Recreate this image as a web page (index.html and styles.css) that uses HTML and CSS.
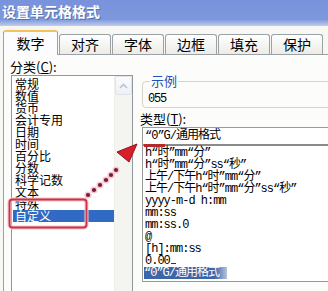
FILE: index.html
```html
<!DOCTYPE html>
<html lang="zh-CN">
<head>
    <meta charset="UTF-8">
    <title>设置单元格格式</title>
    <link rel="stylesheet" href="styles.css">
</head>
<body>
    <div class="titlebar">设置单元格格式</div>

    <div class="tabs">
        <div class="tab active">数字</div>
        <div class="tab">对齐</div>
        <div class="tab">字体</div>
        <div class="tab">边框</div>
        <div class="tab">填充</div>
        <div class="tab">保护</div>
    </div>

    <div class="panel">
        <!-- 分类 -->
        <div class="left-col">
            <div class="label">分类(<u>C</u>):</div>
            <div class="catlist">
                <div class="catitems">
                    <div>常规</div>
                    <div>数值</div>
                    <div>货币</div>
                    <div>会计专用</div>
                    <div>日期</div>
                    <div>时间</div>
                    <div>百分比</div>
                    <div>分数</div>
                    <div>科学记数</div>
                    <div>文本</div>
                    <div>特殊</div>
                    <div class="selected">自定义</div>
                </div>
                <div class="scrollbar">
                    <div class="scroll-btn">
                        <svg width="9" height="6" viewBox="0 0 9 6"><path d="M1 5 L4.5 1.5 L8 5" fill="none" stroke="#b9c3d6" stroke-width="1.6"/></svg>
                    </div>
                </div>
            </div>
        </div>

        <!-- 示例 / 类型 -->
        <div class="right-col">
            <fieldset class="sample">
                <legend>示例</legend>
                <div class="sample-value">055</div>
            </fieldset>
            <div class="label type-label">类型(<u>T</u>):</div>
            <div class="type-input">“0”G/通用格式</div>
            <div class="type-list">
                <div>h“时”mm“分”</div>
                <div>h“时”mm“分”ss“秒”</div>
                <div>上午/下午h“时”mm“分”</div>
                <div>上午/下午h“时”mm“分”ss“秒”</div>
                <div>yyyy-m-d h:mm</div>
                <div>mm:ss</div>
                <div>mm:ss.0</div>
                <div>@</div>
                <div>[h]:mm:ss</div>
                <div>0.00<span class="caret"></span></div>
                <div><span class="selected">“0”G/通用格式</span></div>
            </div>
        </div>
    </div>

    <!-- 标注：红框和箭头 -->
    <svg class="markup" width="328" height="291" viewBox="0 0 328 291">
        <rect x="9.5" y="199.5" width="77" height="28" rx="3" fill="none" stroke="#f3c3ca" stroke-width="4"/>
        <rect x="9.5" y="199.5" width="77" height="28" rx="3" fill="none" stroke="#cc3344" stroke-width="1.8"/>
        <rect x="144" y="144" width="21" height="3" fill="#b42a2a"/>
        <g fill="#f4c8d1">
            <circle cx="88" cy="195" r="3.6"/>
            <circle cx="94" cy="190" r="3.6"/>
            <circle cx="100" cy="185" r="3.6"/>
            <circle cx="106" cy="180" r="3.6"/>
            <circle cx="111" cy="175" r="3.6"/>
            <circle cx="116" cy="170" r="3.6"/>
        </g>
        <g fill="#7a1a38">
            <circle cx="88" cy="195" r="2.1"/>
            <circle cx="94" cy="190" r="2.1"/>
            <circle cx="100" cy="185" r="2.1"/>
            <circle cx="106" cy="180" r="2.1"/>
            <circle cx="111" cy="175" r="2.1"/>
            <circle cx="116" cy="170" r="2.1"/>
        </g>
        <polygon points="137,144 117,152 129,162" fill="#d81e28" stroke="#8e1420" stroke-width="1"/>
    </svg>
</body>
</html>
```

FILE: styles.css
```css
body {
    margin: 0;
    width: 328px;
    height: 291px;
    overflow: hidden;
    position: relative;
    background: #f7f7f3;
    font-family: "Noto Sans CJK SC", sans-serif;
    color: #000;
}
.titlebar {
    height: 26px;
    padding-left: 2px;
    line-height: 23px;
    font-size: 14px;
    font-weight: bold;
    color: #fff;
    text-shadow: 1px 1px 0 #5a6fa8;
    background: linear-gradient(#7893dc, #7e98dc 75%, #c2cdec 100%);
}
.tabs {
    display: flex;
    align-items: flex-end;
    gap: 1px;
    height: 28px;
    padding-left: 3px;
    position: relative;
    z-index: 1;
}
.tab {
    width: 50px;
    height: 19px;
    border: 1px solid #9aa2a6;
    border-bottom: none;
    border-radius: 3px 3px 0 0;
    background: linear-gradient(#ffffff, #ecebe6);
    font-size: 14px;
    line-height: 19px;
    text-align: center;
}
.tab.active {
    width: 53px;
    height: 23px;
    border-top: 2px solid #f6c15a;
    background: #fcfcfe;
    line-height: 23px;
    margin-bottom: -1px;
}
.panel {
    display: flex;
    margin-left: 3px;
    height: 260px;
    border-top: 1px solid #9aa2a6;
    border-left: 1px solid #9aa2a6;
    background: #fcfcfb;
}
.label {
    font-size: 13px;
    line-height: 14px;
}
.label u {
    text-decoration: underline;
}
.left-col {
    flex-shrink: 0;
    padding: 5px 0 0 6px;
}
.catlist {
    display: flex;
    width: 120px;
    height: 230px;
    margin: 1px 0 0 1px;
    border: 1px solid #8f969c;
    background: #fff;
}
.catitems {
    flex: 1;
    padding: 2px 0 0 1px;
    font-size: 12px;
    line-height: 12px;
}
.catitems div {
    padding-left: 2px;
}
.catitems .selected {
    background: #316ac5;
    color: #fff;
}
.scrollbar {
    width: 17px;
    background: #f4f4f0;
    border-left: 1px solid #eeeeea;
}
.scroll-btn {
    height: 17px;
    display: flex;
    align-items: center;
    justify-content: center;
    border: 1px solid #e0e3ea;
    border-radius: 2px;
    background: linear-gradient(#fbfbfd, #eef0f5);
}
.right-col {
    flex-shrink: 0;
    padding: 20px 0 0 9px;
}
.sample {
    width: 240px;
    height: 31px;
    margin: 0;
    padding: 0 0 0 5px;
    border: 1px solid #d3d3c6;
    border-radius: 4px;
}
.sample legend {
    color: #1f52b8;
    font-size: 13px;
    line-height: 12px;
    padding: 0 1px;
    margin-left: 2px;
}
.sample-value {
    font-family: "Liberation Mono", monospace;
    font-size: 12px;
    letter-spacing: -1.2px;
    line-height: 12px;
    margin-top: 6px;
}
.type-label {
    margin: 4px 0 0 -2px;
}
.type-input {
    width: 240px;
    height: 16px;
    margin-top: 1px;
    padding-left: 2px;
    border: 1px solid #9a9a9a;
    border-bottom: 2px solid #8a8a8a;
    background: #fff;
    font-family: "Liberation Mono", "Noto Sans CJK SC", monospace;
    font-size: 12px;
    letter-spacing: -1px;
    line-height: 16px;
}
.type-list {
    width: 240px;
    height: 134px;
    padding: 1px 0 0 2px;
    border: 1px solid #9a9a9a;
    border-top: none;
    background: #fff;
    font-family: "Liberation Mono", "Noto Sans CJK SC", monospace;
    font-size: 12px;
    letter-spacing: -1px;
    line-height: 12px;
}
.type-list .selected {
    display: inline-block;
    padding-right: 8px;
    margin-left: -1px;
    background: linear-gradient(90deg, #3d66a8 85%, #b6c3dc);
    color: #fff;
}
.caret {
    display: inline-block;
    width: 5px;
    height: 1px;
    margin-left: 1px;
    background: #333;
}
.markup {
    position: absolute;
    top: 0;
    left: 0;
    pointer-events: none;
}
```
